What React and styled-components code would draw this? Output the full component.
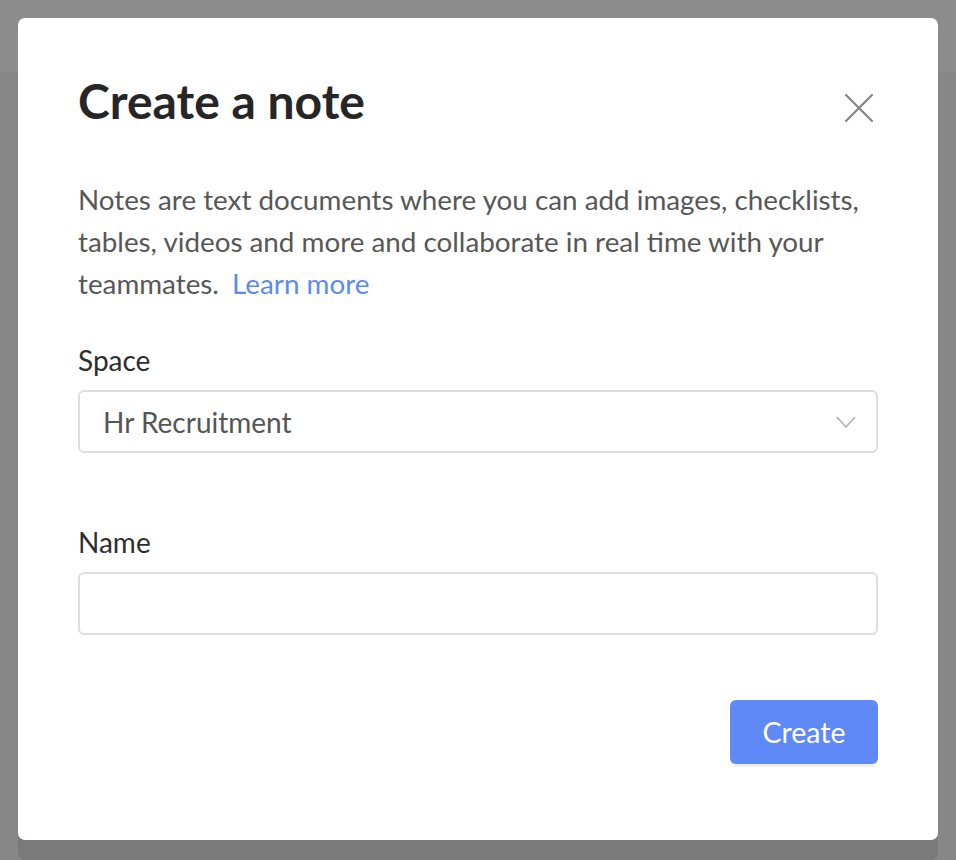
import styled, { createGlobalStyle } from 'styled-components';

const GlobalStyle = createGlobalStyle`
  html, body {
    margin: 0;
    padding: 0;
  }
  body {
    font-family: Lato, "Noto Sans", sans-serif;
    background: #878787;
  }
  * {
    box-sizing: border-box;
  }
`;

const Page = styled.div`
  position: relative;
  width: 956px;
  height: 860px;
  background: #878787;
  overflow: hidden;
`;

const TopBar = styled.div`
  height: 72px;
  background: #8c8c8c;
`;

const Overlay = styled.div`
  position: absolute;
  inset: 0;
  padding: 18px;
  display: flex;
  align-items: flex-start;
  justify-content: center;
`;

const Modal = styled.div`
  width: 920px;
  height: 822px;
  background: #fff;
  border-radius: 7px;
  padding: 56px 60px 0;
  display: flex;
  flex-direction: column;
  box-shadow: 0 20px 0 rgba(0, 0, 0, 0.09);
`;

const Header = styled.div`
  display: flex;
  align-items: center;
  justify-content: space-between;
`;

const Title = styled.h1`
  margin: 0;
  font-size: 48px;
  line-height: 53px;
  font-weight: 700;
  color: #262626;
`;

const CloseButton = styled.button`
  border: none;
  background: none;
  padding: 0;
  margin-top: 14px;
  width: 38px;
  height: 38px;
  display: flex;
  align-items: center;
  justify-content: center;
  cursor: pointer;
`;

const Description = styled.p`
  margin: 52px 0 0;
  font-size: 27.8px;
  line-height: 42px;
  color: #575757;
`;

const Link = styled.a`
  color: #5b8af5;
  text-decoration: none;
  margin-left: 6px;
`;

const Label = styled.label`
  display: block;
  margin-top: ${(p) => p.$top}px;
  font-size: 28px;
  line-height: 34px;
  color: #2e2e2e;
`;

const Field = styled.div`
  margin-top: 13px;
  height: 63px;
  border: 2px solid #dedede;
  border-radius: 6px;
  display: flex;
  align-items: center;
  justify-content: space-between;
  padding: 0 20px 0 23px;
  font-size: 28px;
  color: #555;
`;

const Footer = styled.div`
  margin-top: 65px;
  display: flex;
  justify-content: flex-end;
`;

const PrimaryButton = styled.button`
  width: 148px;
  height: 64px;
  border: none;
  border-radius: 6px;
  background: #5f89f7;
  color: #fff;
  font-family: Lato, "Noto Sans", sans-serif;
  font-size: 28.5px;
  box-shadow: 0 3px 0 #f0f0f0;
  cursor: pointer;
`;

function CloseIcon() {
  return (
    <svg width="30" height="30" viewBox="0 0 30 30">
      <path d="M2 2 L28 28 M28 2 L2 28" stroke="#858585" strokeWidth="2.2" strokeLinecap="round" />
    </svg>
  );
}

function Chevron() {
  return (
    <svg width="20" height="12" viewBox="0 0 20 12">
      <path d="M1 1 L10 11 L19 1" stroke="#b0b0b0" strokeWidth="1.6" fill="none" />
    </svg>
  );
}

export default function App() {
  return (
    <>
      <GlobalStyle />
      <Page>
        <TopBar />
        <Overlay>
          <Modal>
            <Header>
              <Title>Create a note</Title>
              <CloseButton aria-label="Close">
                <CloseIcon />
              </CloseButton>
            </Header>
            <Description>
              Notes are text documents where you can add images, checklists,
              tables, videos and more and collaborate in real time with your
              teammates.<Link href="#"> Learn more</Link>
            </Description>
            <Label $top={38}>Space</Label>
            <Field>
              <span>Hr Recruitment</span>
              <Chevron />
            </Field>
            <Label $top={72}>Name</Label>
            <Field />
            <Footer>
              <PrimaryButton>Create</PrimaryButton>
            </Footer>
          </Modal>
        </Overlay>
      </Page>
    </>
  );
}
